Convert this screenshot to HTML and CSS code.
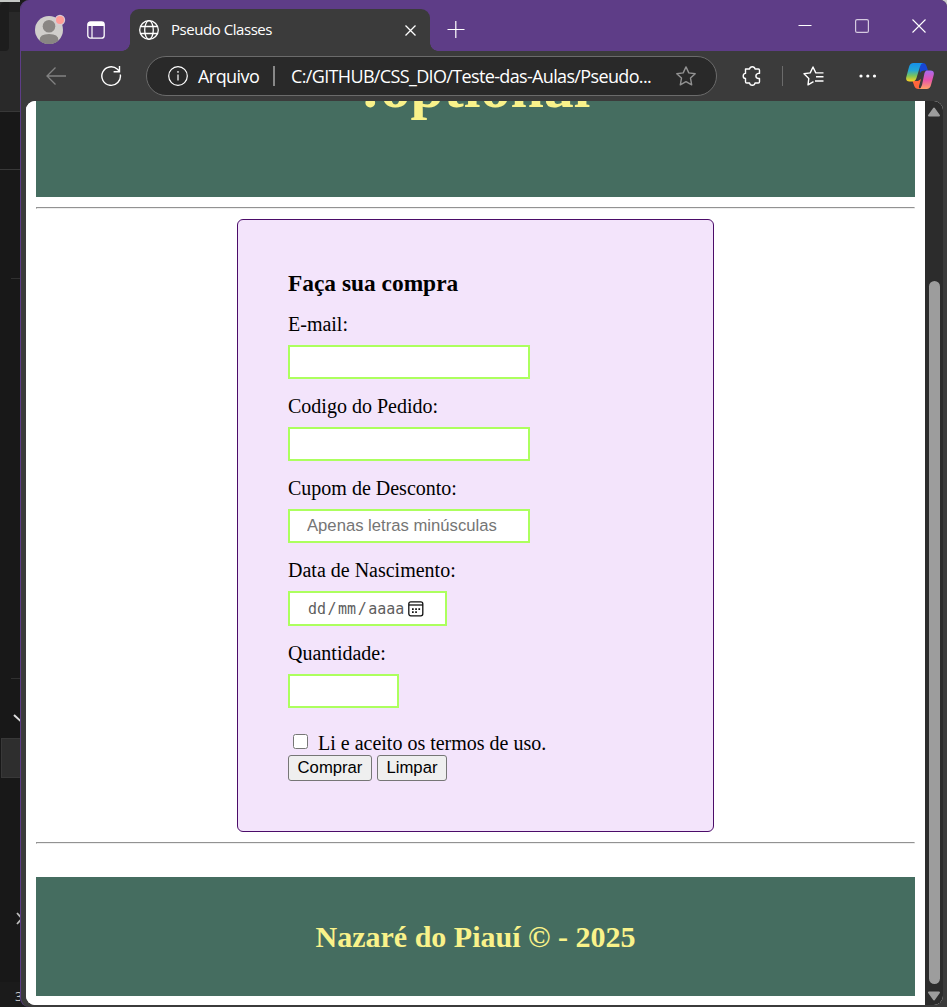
FILE: index.html
```html
<!DOCTYPE html>
<html lang="pt-BR">
<head>
<meta charset="utf-8">
<title>Pseudo Classes</title>
<link rel="stylesheet" href="styles.css">
</head>
<body>
<div class="desktop">
  <aside class="editor">
    <div class="ed-top"><div class="ed-tab"></div><div class="ed-tab2"></div></div>
    <div class="ed-bar"></div>
    <div class="ed-a"></div>
    <div class="ed-b"></div>
    <div class="ed-c"><svg width="20" height="60" fill="none" stroke="#ddd" stroke-width="2"><path d="M14 36l6 5.500 6-5.500"/></svg></div>
    <div class="ed-sel"></div>
    <div class="ed-d"><svg width="20" height="204" fill="none" stroke="#bbb" stroke-width="1.800"><path d="M17 135l5 5.500-5 5.500"/></svg></div>
    <div class="ed-status"><span>3</span></div>
  </aside>
  <main class="window">
    <header class="titlebar">
      <svg class="avatar" width="34" height="34" viewBox="0 0 34 34"><circle cx="15" cy="18" r="14" fill="#d0cecb"/><circle cx="15" cy="14.200" r="6.300" fill="#898683"/><path d="M5.500 28.400Q5.500 22 15 22T24.500 28.400A14 14 0 0 1 5.500 28.400" fill="#898683"/><circle cx="26" cy="8" r="5.200" fill="#d8cbd3"/><circle cx="26" cy="8" r="4" fill="#ff9c96"/></svg>
      <svg class="spaces" width="18" height="18" viewBox="0 0 18 18"><rect x=".8" y=".8" width="16.400" height="16.400" rx="2.700" fill="none" stroke="#fff" stroke-width="1.300"/><path d="M1 5V3Q1 1 3 1H15Q17 1 17 3V5Z" fill="#fff"/><path d="M5 5V17" stroke="#fff" stroke-width="1.200"/></svg>
      <div class="tab">
        <svg class="globe" width="20" height="20" viewBox="0 0 20 20" fill="none" stroke="#fff" stroke-width="1.300"><circle cx="10" cy="10" r="9.300"/><ellipse cx="10" cy="10" rx="4.300" ry="9.300"/><path d="M1.500 6.500H18.500M1.500 13.500H18.500"/></svg>
        <span class="tab-title">Pseudo Classes</span>
        <svg class="tab-x" width="11" height="11" fill="none" stroke="#fff" stroke-width="1.300"><path d="M.5.5l10 10M10.500.5l-10 10"/></svg>
      </div>
      <svg class="plus" width="18" height="18" stroke="#fff" stroke-width="1.200"><path d="M.5 9.500H17.500M8.800 1V18"/></svg>
      <svg class="min" width="14" height="14" stroke="#fff"><path d="M.5 6.500H13.500"/></svg>
      <svg class="max" width="14" height="14" fill="none" stroke="#d5cae0" stroke-width="1.200"><rect x=".6" y=".6" width="12.800" height="12.800" rx="1.500"/></svg>
      <svg class="close" width="14" height="14" stroke="#fff" stroke-width="1.100"><path d="M.5.5l13 13M13.500.5l-13 13"/></svg>
    </header>
    <nav class="toolbar">
      <svg class="back" width="22" height="18" fill="none" stroke="#828282" stroke-width="1.300"><path d="M10.500.5L2 9l8.500 8.500M2 9H21"/></svg>
      <svg class="reload" width="22" height="22" fill="none" stroke="#fff" stroke-width="1.400"><path d="M20.300 9.500A9.300 9.300 0 1 1 17.500 4.300L19.500 6.500M19.500 1V6.700H13.600"/></svg>
      <div class="address">
        <svg class="info" width="20" height="20" fill="none" stroke="#fff" stroke-width="1.200"><circle cx="10" cy="10" r="9.300"/><path d="M10 8.500V14.500"/><circle cx="10" cy="5.900" r=".6" fill="#fff" stroke-width=".5"/></svg>
        <span class="scheme">Arquivo</span>
        <i class="bar"></i>
        <span class="url">C:/GITHUB/CSS_DIO/Teste-das-Aulas/Pseudo...</span>
        <svg class="star" width="20" height="20" fill="none" stroke="#929292" stroke-width="1.400" stroke-linejoin="round"><path d="M10 .9l2.800 6 6.400.8-4.700 4.400 1.200 6.700L10 15.600l-5.700 3.200 1.200-6.700L.8 7.700l6.400-.8Z"/></svg>
      </div>
      <svg class="puzzle" width="20" height="20" fill="none" stroke="#fff" stroke-width="1.400" stroke-linejoin="round"><path d="M3.500 3H7.600Q8 .7 10.300.7T13 3H16.300Q17.500 3 17.500 4.200V7.400H16.300Q13.900 7.900 13.900 10T16.300 12.500H17.500V15.800Q17.500 17 16.300 17H13Q12.700 19.300 10.300 19.300T7.600 17H4.700Q3.500 17 3.500 15.800V12.500Q1.200 12.500 1.200 10T3.500 7.400Z"/></svg>
      <i class="sep"></i>
      <svg class="favs" width="21" height="20" fill="none" stroke="#fff" stroke-width="1.400" stroke-linejoin="round"><path d="M10.500 15.600L5 18.800l.8-6.400L1 7.800l6.200-.9L10 1l2.800 5.900H20.500M13 10.700H20.500M12 15H20.500"/></svg>
      <svg class="dots" width="18" height="4" fill="#fff"><circle cx="2" cy="2" r="1.600"/><circle cx="8.800" cy="2" r="1.600"/><circle cx="15.500" cy="2" r="1.600"/></svg>
      <svg class="copilot" width="28" height="26" viewBox="0 0 28 26">
        <defs>
          <linearGradient id="g1" x1="0" y1="0" x2="0" y2="1"><stop offset="0" stop-color="#1590eb"/><stop offset=".4" stop-color="#24a7d5"/><stop offset=".7" stop-color="#7dc459"/><stop offset="1" stop-color="#ffd321"/></linearGradient>
          <linearGradient id="g2" x1="0" y1="0" x2="0" y2="1"><stop offset="0" stop-color="#a56bf1"/><stop offset=".5" stop-color="#e653ad"/><stop offset="1" stop-color="#ffa265"/></linearGradient>
        </defs>
        <path d="M13 0H17Q19.500 0 20.500 3L22 7.500H18Q15 7.500 14 10Z" fill="#1746d3"/>
        <path d="M6.500 18H12L15 16 13 23Q12.300 25.500 15 26H12.500Q9.300 26 8.300 23Z" fill="#ff653c"/>
        <path d="M7.500 0H17Q15 .4 14 3.500L10.500 15Q9.500 18.500 6 18.500H3.500Q-.7 18.500.3 14L3 4Q4 0 7.500 0Z" fill="url(#g1)"/>
        <path d="M20.500 7.500H24.500Q28.700 7.500 27.700 12L25 22Q24 26 20.500 26H13Q15 25.500 16 22L18.500 10Q19 8 20.500 7.500Z" fill="url(#g2)"/>
      </svg>
    </nav>
    <section class="viewport">
      <div class="page">
        <div class="banner"><h1>:optional</h1></div>
        <hr>
        <form class="order">
          <h3>Faça sua compra</h3>
          <label for="email">E-mail:</label>
          <input id="email" class="field" type="text">
          <label for="code">Codigo do Pedido:</label>
          <input id="code" class="field" type="text">
          <label for="coupon">Cupom de Desconto:</label>
          <input id="coupon" class="field" type="text" placeholder="Apenas letras minúsculas">
          <label for="birth">Data de Nascimento:</label>
          <div id="birth" class="field date"><span>dd</span><span class="slash">/</span><span>mm</span><span class="slash">/</span><span>aaaa</span><svg width="16" height="16" fill="none" stroke="#111" stroke-width="1.300"><rect x=".8" y=".8" width="14" height="14" rx="2"/><path d="M1 4H15"/><path d="M4 8.200H13M4 11.200H9.500" stroke-width="1.700" stroke-dasharray="1.700 1.500"/></svg></div>
          <label for="amount">Quantidade:</label>
          <input id="amount" class="field amount" type="text">
          <div class="terms"><input id="terms" type="checkbox"><label for="terms">Li e aceito os termos de uso.</label></div>
          <div class="actions"><button type="button" class="buy">Comprar</button><button type="button" class="clear">Limpar</button></div>
        </form>
        <hr>
        <footer><h2>Nazaré do Piauí © - 2025</h2></footer>
      </div>
      <div class="scroll">
        <svg width="14" height="10" fill="#9d9d9d" stroke="#9d9d9d" stroke-width="2" stroke-linejoin="round"><path d="M7 1.500L12 8.500H2Z"/></svg>
        <div class="thumb"></div>
        <svg width="14" height="10" fill="#9d9d9d" stroke="#9d9d9d" stroke-width="2" stroke-linejoin="round"><path d="M7 8.500L12 1.500H2Z"/></svg>
      </div>
    </section>
  </main>
</div>
</body>
</html>
```
FILE: styles.css
```css
* { box-sizing: border-box; }
body { margin: 0; }
svg { display: block; flex: none; }
.desktop { width: 947px; height: 1007px; display: flex; overflow: hidden; background: linear-gradient(90deg, #1b1b1b 50%, #c9c9c9 50%); }

.editor { width: 20px; flex: none; background: #181818; overflow: hidden; }
.ed-top { height: 111px; display: flex; background: #292929; border-top: 2px solid #c5c8c5; }
.ed-tab { width: 9px; height: 49px; background: #1d1d1d; border-radius: 5px 0 4px 0; }
.ed-tab2 { flex: 1; height: 10px; background: #202020; }
.ed-bar { height: 59px; border-top: 1px solid #383838; border-bottom: 1px solid #383838; }
.ed-a { height: 109px; margin-left: 11px; border-bottom: 1px solid #303030; }
.ed-b { height: 400px; margin-left: 11px; border-bottom: 1px solid #303030; }
.ed-c { height: 59px; overflow: hidden; }
.ed-sel { height: 40px; margin-left: 1px; background: #2e2e2e; border: 1px solid #383838; border-right: 0; }
.ed-d { height: 204px; }
.ed-status { height: 25px; padding: 5px 0 0 15px; background: #1b1b1b; color: #c8c8c8; font: 13px/18px "Open Sans", sans-serif; }

.window { flex: 1; min-width: 0; display: flex; flex-direction: column; background: #3b3b3b; border-left: 1px solid #5e3d87; border-radius: 9px 7px 0 9px; overflow: hidden; }
.titlebar { height: 51px; flex: none; display: flex; background: #5e3d87; }
.avatar { margin: 12px 0 0 13px; }
.spaces { margin: 21px 0 0 19px; }
.tab { position: relative; width: 300px; height: 42px; margin: 9px 0 0 25px; display: flex; background: #3b3b3b; border-radius: 9px 9px 0 0; }
.tab::before, .tab::after { content: ""; position: absolute; bottom: 0; width: 8px; height: 8px; }
.tab::before { left: -8px; background: radial-gradient(circle at 0 0, transparent 7.500px, #3b3b3b 8px); }
.tab::after { right: -8px; background: radial-gradient(circle at 100% 0, transparent 7.500px, #3b3b3b 8px); }
.globe { margin: 11px 0 0 9px; }
.tab-title { width: 234px; margin: 9px 0 0 12px; color: #fff; font: 15px/22px "Open Sans", sans-serif; letter-spacing: -.45px; white-space: nowrap; }
.tab-x { margin-top: 16px; }
.plus { margin: 20px 0 0 17px; }
.min { margin: 19px 0 0 333px; }
.max { margin: 19px 0 0 43px; }
.close { margin: 19px 0 0 43px; }

.toolbar { height: 50px; flex: none; display: flex; align-items: center; }
.back { margin-left: 24px; }
.reload { margin-left: 33px; }
.address { width: 571px; height: 40px; margin-left: 24px; padding-left: 21px; display: flex; align-items: center; border: 1px solid #6b6b6b; border-radius: 20px; background: #292929; color: #fff; font: 18px/24px "Open Sans", sans-serif; white-space: nowrap; }
.scheme { width: 75px; margin-left: 10px; letter-spacing: -.6px; }
.scheme { letter-spacing: -.55px; }
.bar { width: 2px; height: 20px; background: #888; }
.url { width: 384px; margin-left: 16px; letter-spacing: -.65px; }
.star { margin-left: 1px; }
.puzzle { margin-left: 25px; }
.sep { width: 1px; height: 20px; margin-left: 20px; background: #6b6b6b; }
.favs { margin-left: 20px; }
.dots { margin-left: 35px; }
.copilot { margin-left: 29px; }

.viewport { height: 904px; display: flex; margin: 0 4px 0 5px; border-radius: 9px; overflow: hidden; background: #fff; }
.page { width: 899px; padding: 0 10px; background: #fff; font-family: "Liberation Serif", serif; }
.banner { height: 96px; overflow: hidden; background: #456d60; color: #f9f28a; }
h1 { margin: -49px 0 0; font-size: 60px; line-height: 70px; text-align: center; }
hr { margin: 10px 0; border: 1px solid; border-color: #929292 #eee #eee #929292; }
.order { width: 477px; height: 613px; margin: 0 0 0 201px; padding: 50px; border: 1px solid #4b0c69; border-radius: 6px; background: #f3e4fb; color: #000; font-size: 20px; }
h3 { margin: 0 0 15px; font-size: 23.400px; line-height: 27px; white-space: nowrap; }
.order > label { display: block; height: 27px; margin-bottom: 6px; line-height: 25px; }
.field { display: block; width: 242px; height: 34px; margin: 0; padding: 0 17px; border: 2px solid #acff5e; border-radius: 0; background: #fff; outline: 0; font: 16.670px "Liberation Sans", sans-serif; }
.field::placeholder { color: #757575; opacity: 1; }
.order > .field { margin-bottom: 15px; }
.date { width: 159px; height: 35px; display: flex; align-items: center; padding-left: 18px; color: #5e5e5e; font: 15px "DejaVu Sans Mono", monospace; }
.slash { margin: 0 1.500px; }
.date svg { margin-left: 4px; }
.order > .amount { width: 111px; margin-bottom: 22px; }
.terms { height: 25px; display: flex; align-items: center; }
.terms label { padding-top: 2px; }
.terms input { width: 15px; height: 15px; margin: 0 10px 2px 5px; }
.actions { display: flex; gap: 5px; }
.actions button { height: 26px; padding: 0; border: 1px solid #767676; border-radius: 3px; background: #efefef; color: #000; font: 16.670px "Liberation Sans", sans-serif; }
.buy { width: 84px; }
.clear { width: 70px; }
footer { height: 119px; margin-top: 33px; padding-top: 43px; background: #456d60; color: #f9f28a; }
h2 { margin: 0; font-size: 30px; line-height: 34px; text-align: center; }
.scroll { flex: 1; display: flex; flex-direction: column; align-items: center; justify-content: space-between; padding: 6px 0 4px; background: #2c2c2c; }
.thumb { width: 11px; height: 703px; margin-top: 156px; border-radius: 6px; background: #9d9d9d; }
```
